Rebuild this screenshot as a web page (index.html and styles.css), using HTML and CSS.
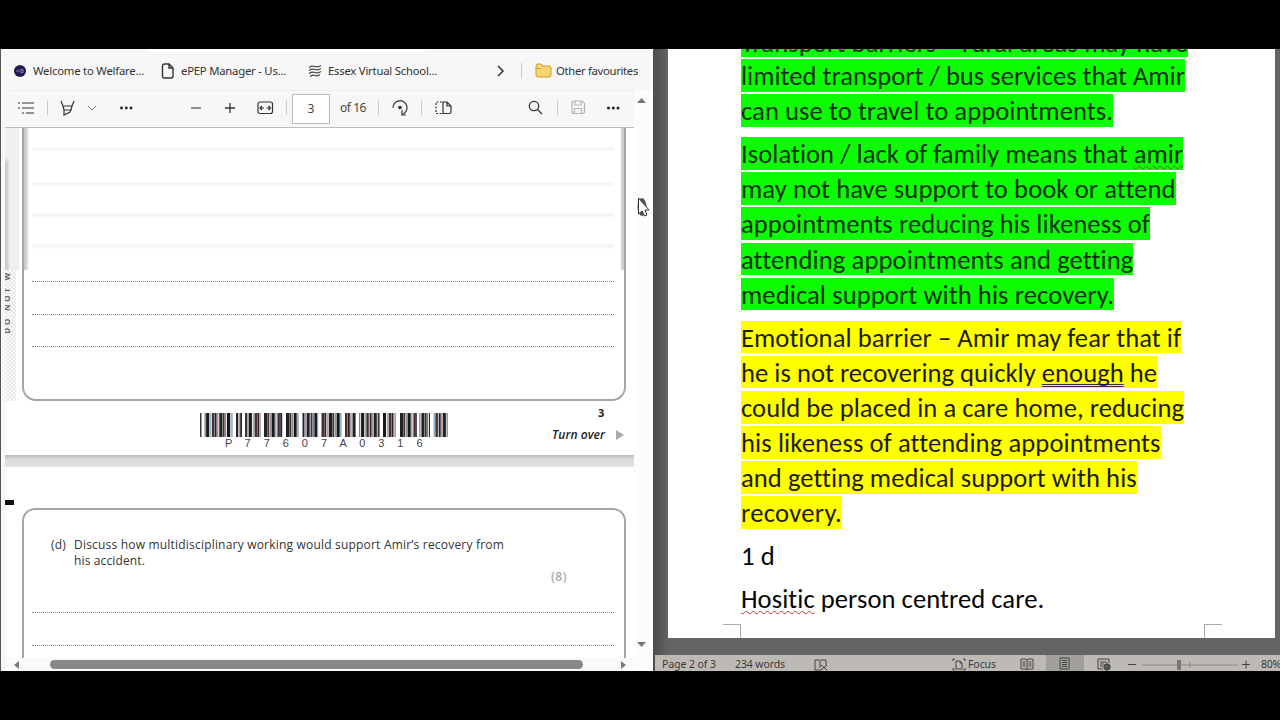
FILE: index.html
```html
<!DOCTYPE html>
<html lang="en">
<head>
<meta charset="utf-8">
<title>Desktop</title>
<link rel="stylesheet" href="styles.css">
</head>
<body>
<main class="desktop">
<section class="browser">
  <div class="address"></div>
  <nav class="bookmarks">
    <svg width="14" height="14"><circle cx="7" cy="7" r="6" fill="#211b50"/><path d="M3 7h2M6 5.500v3M8 5.500h2v3H8z" stroke="#8a80bd" fill="none"/></svg>
    <span data-w="111">Welcome to Welfare...</span>
    <svg width="14" height="16" fill="none" stroke="#333" stroke-width="1.4"><path d="M1.500 3q0-2 2-2H8l4 4v8q0 2-2 2H3.500q-2 0-2-2zM8 1v4h4"/></svg>
    <span data-w="105">ePEP Manager - Us...</span>
    <svg width="14" height="14" fill="none" stroke="#444" stroke-width="1.300"><path d="M1 3.500q3-2 6-1t6-1M1 6.500q3-2 6-1t6-1M1 9.500q3-2 6-1t6-1M2 12.500q3-2 5-1t5-1"/></svg>
    <span data-w="109">Essex Virtual School...</span>
    <svg width="9" height="14" fill="none" stroke="#333" stroke-width="1.500"><path d="M2 2l5 5-5 5"/></svg>
    <i class="rule"></i>
    <svg width="17" height="15" fill="#f9d66b" stroke="#c99b2d"><path d="M1 3q0-2 2-2h3l2 2h6q2 0 2 2v7q0 2-2 2H3q-2 0-2-2zM1 5.500h5l2-2"/></svg>
    <span data-w="82">Other favourites</span>
  </nav>
  <div class="body">
    <div class="viewer">
      <div class="toolbar">
        <svg width="18" height="14" stroke="#333" stroke-width="1.200"><path d="M0 2h2M4 2h12M0 7h2M4 7h12M4 12h2M8 12h8"/></svg>
        <i class="rule"></i>
        <svg width="16" height="18" fill="none" stroke="#333" stroke-width="1.200"><path d="M1 2l2 5h9l2-5M3 7l1 4h7l1-4M4 11v5l6-3 1-2"/></svg>
        <svg width="10" height="8" fill="none" stroke="#777"><path d="M1 2l4 4 4-4"/></svg>
        <svg width="16" height="6" fill="#222"><circle cx="2.500" cy="3" r="1.400"/><circle cx="7.300" cy="3" r="1.400"/><circle cx="12" cy="3" r="1.400"/></svg>
        <svg width="12" height="12" stroke="#444" stroke-width="1.200"><path d="M1 6h10"/></svg>
        <svg width="12" height="12" stroke="#333" stroke-width="1.300"><path d="M1 6h10M6 1v10"/></svg>
        <svg width="17" height="14" fill="none" stroke="#333" stroke-width="1.200"><rect x="1" y="1" width="14.500" height="11.500" rx="2"/><path d="M3 7h4M5 5L3 7l2 2M13.500 7h-4M11.500 5l2 2-2 2"/></svg>
        <i class="rule"></i>
        <span class="pagebox">3</span>
        <span data-w="26">of 16</span>
        <i class="rule"></i>
        <svg width="18" height="17" fill="none" stroke="#333" stroke-width="1.200"><path d="M2 9a7 7 0 1 1 10 6M11 11v5h4"/><circle cx="9" cy="8.500" r="1.200" fill="#333"/></svg>
        <i class="rule"></i>
        <svg width="18" height="14" fill="none" stroke="#333" stroke-width="1.200"><path d="M8 1h4l4 4v6q0 1.500-1.500 1.500H8zM12 1v4h4"/><path d="M7 1H1v11.500h6" stroke-dasharray="2 1.500"/></svg>
        <svg width="15" height="15" fill="none" stroke="#333" stroke-width="1.300"><circle cx="6" cy="6" r="4.700"/><path d="M9.500 9.500L14 14"/></svg>
        <i class="rule"></i>
        <svg width="15" height="15" fill="none" stroke="#b5b5b5" stroke-width="1.200"><path d="M1 3q0-2 2-2h8l2.500 2.500V12q0 1.500-1.500 1.500H3q-2 0-2-2zM4 1v4h6V1M3.500 13V8.500h7V13"/></svg>
        <svg width="16" height="6" fill="#222"><circle cx="2.500" cy="3" r="1.500"/><circle cx="7.300" cy="3" r="1.500"/><circle cx="12" cy="3" r="1.500"/></svg>
      </div>
      <div class="pdf">
        <div class="upper">
          <div class="margin"><div class="haze"></div><div class="hatch"><b>DO NOT W</b></div></div>
          <div class="box answers">
            <div class="soft s1"></div><div class="soft s2"></div><div class="soft s3"></div><div class="soft s3"></div>
            <div class="dots d1"></div><div class="dots"></div><div class="dots"></div>
          </div>
        </div>
        <footer class="foot">
          <div class="code"><svg id="bars" width="248" height="24"></svg>
            <div class="digits"><span>P</span><span>7</span><span>7</span><span>6</span><span>0</span><span>7</span><span>A</span><span>0</span><span>3</span><span>1</span><span>6</span></div></div>
          <div class="turn"><b>3</b><div class="over"><em data-w="53">Turn over</em><svg width="9" height="10" fill="#aaa"><path d="M0 0l8 5-8 5z"/></svg></div></div>
        </footer>
        <div class="gap"></div>
        <div class="lower">
          <div class="mark"></div>
          <div class="box question">
            <div class="q"><span data-w="15">(d)</span><p><span data-w="430">Discuss how multidisciplinary working would support Amir’s recovery from</span><br><span data-w="71">his accident.</span></p></div>
            <div class="score"><span data-w="16">(8)</span></div>
            <div class="dots"></div><div class="dots"></div>
          </div>
        </div>
      </div>
      <div class="hscroll"><svg width="6" height="8"><path d="M5 0v8L0 4z"/></svg><div class="thumb"></div><svg width="6" height="8"><path d="M0 0v8l5-4z"/></svg></div>
    </div>
    <div class="vscroll"><svg width="9" height="6"><path d="M0 5h9L4.500 0z"/></svg><svg width="9" height="6"><path d="M0 0h9L4.500 5z"/></svg></div>
  </div>
</section>
<section class="word">
  <div class="sheet">
    <div class="para green first"><div><span data-w="447">Transport barriers – rural areas may have</span></div><div><span data-w="444">limited transport / bus services that Amir</span></div><div><span data-w="372">can use to travel to appointments.</span></div></div>
    <div class="para green"><div><span data-w="442">Isolation / lack of family means that <u class="wave olive">amir</u></span></div><div><span data-w="434">may not have support to book or attend</span></div><div><span data-w="409">appointments reducing his likeness of</span></div><div><span data-w="391">attending appointments and getting</span></div><div><span data-w="373">medical support with his recovery.</span></div></div>
    <div class="para yellow"><div><span data-w="440">Emotional barrier – Amir may fear that if</span></div><div><span data-w="416">he is not recovering quickly <u class="twice">enough</u> he</span></div><div><span data-w="443">could be placed in a care home, reducing</span></div><div><span data-w="419">his likeness of attending appointments</span></div><div><span data-w="395">and getting medical support with his</span></div><div><span data-w="101">recovery.</span></div></div>
    <div class="para"><div><span data-w="34">1 d</span></div></div>
    <div class="para"><div><span data-w="303"><u class="wave red">Hositic</u> person centred care.</span></div></div>
    <div class="corners"><i></i><i></i></div>
  </div>
  <div class="status">
    <span data-w="54">Page 2 of 3</span>
    <span data-w="50">234 words</span>
    <svg width="14" height="13"><path d="M6 2H1v10h6M6 2v8M7 2h5v5M7 7l6 5M13 7l-6 5"/></svg>
    <svg width="14" height="13"><path d="M3 1H1v2M11 1h2v2M1 10v2h2M13 10v2h-2M4 3h4l2 2v6H4zM8 3v2h2"/></svg>
    <span data-w="28">Focus</span>
    <svg width="14" height="13"><path d="M1 1h5l1 1 1-1h5v10H8l-1 1-1-1H1zM7 2v10M2.500 4H5.500M2.500 6H5.500M2.500 8H5.500M8.500 4h3M8.500 6h3M8.500 8h3"/></svg>
    <div class="active"><svg width="12" height="13"><path d="M1 1h9v11H1zM3 3.500h5M3 5.500h5M3 7.500h5M3 9.500h5"/></svg></div>
    <svg width="15" height="13"><path d="M6 11H1V1h11v4M3 4h7M3 6h4M3 8h3"/><circle cx="10" cy="9" r="3.200" fill="#555"/></svg>
    <svg width="8" height="13"><path d="M0 6.500h8"/></svg>
    <svg width="96" height="13"><path d="M0 7h96M48 4v6" style="stroke:#8b8986"/><rect x="35" y="2" width="4" height="10" fill="#777" stroke="none"/></svg>
    <svg width="8" height="13"><path d="M0 6.500h8M4 2.500v8"/></svg>
    <span data-w="20">80%</span>
  </div>
</section>
<svg class="cursor" width="14" height="23"><ellipse cx="5" cy="11" rx="4.500" ry="9" fill="#555"/><path d="M1.500 2v16l3.500-3 2.500 5 2.500-1-2-5h4z" fill="#fff" stroke="#333"/></svg>
</main>
<script src="main.js"></script>
</body>
</html>
```
FILE: styles.css
```css
* { box-sizing: border-box; }
body { margin: 0; background: #000; width: 1280px; height: 720px; overflow: hidden; font-family: "Noto Sans", sans-serif; }
svg { display: block; flex: none; }
[data-w] { display: inline-block; white-space: nowrap; }
.desktop { position: relative; display: flex; margin-top: 49px; height: 622px; overflow: hidden; }
.browser { width: 653px; flex: none; background: #f7f7f7; border-left: 1px solid #555; display: flex; flex-direction: column; }
.address { height: 3px; margin-left: 146px; width: 278px; background: #fff; border-radius: 0 0 4px 4px; flex: none; }
.bookmarks { height: 38px; flex: none; display: grid; align-items: center; justify-items: start; color: #333; font-size: 11.3px; padding: 0 0 1px 12px;
  grid-template-columns: 20px 128px 20px 127px 20px 168px 25px 14px 21px 90px; }
.rule { width: 1px; height: 16px; background: #ccc; }
.body { flex: 1; display: flex; min-height: 0; }
.viewer { width: 633px; padding-left: 4px; display: flex; flex-direction: column; }
.toolbar { height: 38px; flex: none; display: grid; align-items: center; justify-items: start; border-top: 1px solid #eee; border-bottom: 1px solid #bdbdbd; padding: 0 0 3px 13px; border-radius: 6px 0 0 0; font-size: 12px; color: #444;
  grid-template-columns: 29px 13px 27px 32px 71px 34px 33px 29px 6px 48px 38px 13px 30px 14px 93px 29px 14px 35px 20px; }
.toolbar .rule { height: 15px; }
.pagebox { width: 38px; height: 30px; margin-top: 2px; border: 1px solid #bbb; background: #fff; line-height: 28px; text-align: center; }
.pdf { height: 530px; background: #fff; overflow: hidden; }
.upper { display: flex; height: 273px; }
.margin { width: 17px; display: flex; flex-direction: column; flex: none; }
.haze { height: 142px; width: 14px; background: linear-gradient(#f0f0f0 30px, transparent 34px), linear-gradient(90deg, #ccc, #ccc 2px, #efefef 5px, #efefef); }
.hatch { height: 131px; width: 11px; background: repeating-conic-gradient(#e7e7e7 0 25%, #fafafa 0 50%) 0 0/4px 4px; }
.hatch b { display: block; writing-mode: vertical-rl; transform: rotate(180deg); font-size: 8px; letter-spacing: 2.8px; line-height: 9px; width: 9px; margin-left: -3px; color: #666; white-space: nowrap; }
.box { width: 604px; border: 2px solid #a6a6a6; padding: 0 10px 0 8px; }
.answers { border-top: 0; border-radius: 0 0 14px 14px; background: linear-gradient(90deg, #ccc 2px, #fff 5px, #fff 596px, #ccc 598px) 0 0/100% 142px no-repeat; }
.soft { height: 31px; background: linear-gradient(#fff, #f2f2f2, #fff) bottom/100% 6px no-repeat; }
.s1 { height: 24px; }
.s2 { height: 35px; }
.dots { height: 32.5px; border-bottom: 1px dotted #888; }
.d1 { height: 33px; }
.foot { height: 54px; display: flex; padding: 12px 0 0 195px; }
.code { width: 352px; }
.digits { display: flex; padding: 0 0 0 19px; font: 11px/13px "Liberation Sans", sans-serif; color: #444; }
.digits span { width: 19.1px; text-align: center; }
.turn { width: 72px; color: #222; font-size: 11px; line-height: 15px; }
.turn > b { display: block; margin: -8px 0 0 46px; }
.over { display: flex; gap: 11px; align-items: center; margin-top: 7px; }
.over em { font: italic 600 12px/15px "Open Sans", sans-serif; }
.gap { height: 12px; background: linear-gradient(#bbb, #dcdcdc 35%, #e2e2e2); }
.lower { display: flex; padding-top: 33px; }
.mark { width: 9px; margin: 0 8px 0 0; border-top: 5px solid #111; }
.question { margin-top: 8px; height: 180px; border-radius: 13px 13px 0 0; border-bottom: 0; }
.q { display: flex; gap: 8px; padding: 27px 0 0 19px; font: 12px/15.5px "Open Sans", sans-serif; color: #333; }
.q p { margin: 0; }
.score { text-align: right; padding-right: 47px; font: 600 12px/18px "Open Sans", sans-serif; color: #aaa; }
.question .dots:nth-child(3) { height: 27px; }
.hscroll { height: 13px; display: flex; align-items: center; gap: 30px; padding: 0 0 0 9px; background: #fafafa; }
.thumb { width: 533px; height: 9px; background: #888; border-radius: 5px; margin-right: 8px; }
.hscroll svg, .vscroll svg { fill: #777; }
.vscroll { width: 19px; flex: none; background: #fcfcfc; padding: 8px 0 23px 3px; display: flex; flex-direction: column; justify-content: space-between; }
.word { flex: 1; background: linear-gradient(90deg, #4c4c4c, #646464 16px); display: flex; flex-direction: column; overflow: hidden; }
.sheet { margin-left: 15px; width: 607px; height: 589px; flex: none; background: #fff; padding-left: 73px; overflow: hidden; color: #050505; font: 26.6px/35px Carlito, Lato, sans-serif; }
.para { margin-bottom: 8px; }
.para div { height: 35.1px; }
.para div > span { display: block; width: fit-content; height: 32.6px; }
.first { margin-top: -25px; }
.para.first div:first-child span { line-height: 39px; }
.green span { background: #0dfc04; color: #06310a; }
.yellow span { background: #ff0; color: #1d1d05; }
.wave { text-decoration: underline wavy 1px; text-underline-offset: 2px; text-decoration-skip-ink: none; }
.olive { text-decoration-color: #55730a; }
.red { text-decoration-color: #c33; }
.twice { text-decoration: underline double #334 1px; text-underline-offset: 2px; text-decoration-skip-ink: none; }
.corners { display: flex; justify-content: space-between; width: 499px; margin: -2px 0 0 -18px; }
.corners i { width: 18px; height: 16px; border: 1px solid #aaa; border-width: 1px 1px 0 0; }
.corners i + i { border-width: 1px 0 0 1px; }
.status { margin: 17px 0 0 2px; height: 16px; flex: none; background: #bdbab6; display: grid; align-items: center; justify-items: start; padding: 2px 0 0 7px; color: #3b3b3b; font-size: 10.5px; line-height: 14px;
  grid-template-columns: 73px 79px 138px 16px 52px 26px 51px 31px 14px 100px 19px 20px; }
.status > svg, .active svg { fill: none; stroke: #444; stroke-width: 1; }
.active { width: 38px; height: 16px; margin-top: -2px; padding: 2px 0 0 13px; background: #a19f9b; }
.cursor { position: absolute; left: 637px; top: 147px; }
```
FILE: main.js
```js
// Fit each measured run to its column width with letter spacing.
document.querySelectorAll('[data-w]').forEach(el => {
  const n = el.textContent.length;
  const extra = Number(el.dataset.w) - el.getBoundingClientRect().width;
  el.style.letterSpacing = (extra / n) + 'px';
});
// Barcode groups: start and end offsets, filled with cycling bars.
const groups = [[0,1.5],[4.5,32.500],[36,42],[45,61],[64,82.500],[86,99],[102.500,118.500],[121.500,142],[145,156],[159,180],[183,196],[200,217],[219,230],[233.500,247.500]];
const colours = ['#3b353d','#8b7e78','#17191d','#8cb4cf','#572d20','#20253d','#a79d91','#222'];
const widths = [2,1.300,3,1.600,2.500,2,1.600,3];
let k = 0, out = '';
groups.forEach(([a, b]) => {
  for (let x = a; x < b; k++) {
    const w = Math.min(widths[k % 8], b - x);
    out += `<rect x="${x}" y="0" width="${w}" height="24" fill="${colours[k % 8]}"/>`;
    x += w + (k % 3 === 0 ? 0.8 : 0.3);
  }
});
document.getElementById('bars').innerHTML = out;
```
